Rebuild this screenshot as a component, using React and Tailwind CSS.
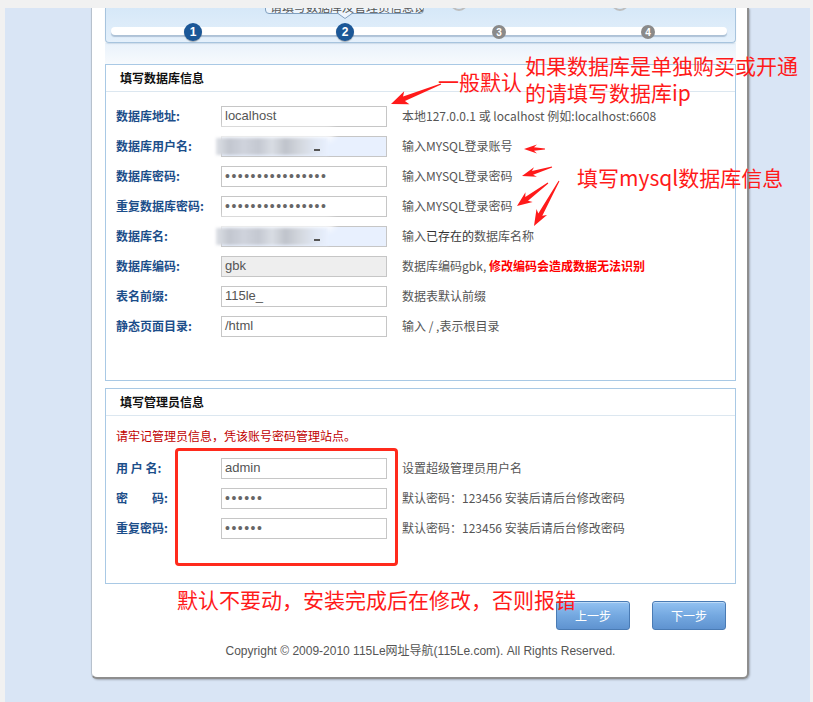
import React from "react";

const CN = "font-['Microsoft_YaHei','Noto_Sans_CJK_SC','Noto_Sans',sans-serif]";
const LAT = "font-['Liberation_Sans','Noto_Sans_CJK_SC',sans-serif]";

function Arrow({ t, p, L = 12, hw = 6, sw = 2.2, tw = 0.5 }) {
  const dx = p[0] - t[0];
  const dy = p[1] - t[1];
  const len = Math.hypot(dx, dy);
  const ux = dx / len;
  const uy = dy / len;
  const nx = -uy;
  const ny = ux;
  const bx = p[0] - ux * L;
  const by = p[1] - uy * L;
  const pts = [
    [t[0] + nx * tw, t[1] + ny * tw],
    [bx + nx * sw, by + ny * sw],
    [bx - ux * 3 + nx * hw, by - uy * 3 + ny * hw],
    p,
    [bx - ux * 3 - nx * hw, by - uy * 3 - ny * hw],
    [bx - nx * sw, by - ny * sw],
    [t[0] - nx * tw, t[1] - ny * tw],
  ];
  return <polygon points={pts.map((q) => q.join(",")).join(" ")} fill="#ff1a1a" />;
}

function Blur() {
  return (
    <>
      <div className="absolute left-[-7px] top-[-10px] w-[120px] h-[14px] bg-white/80 blur-[3px] rounded-full" />
      <div className="absolute left-[-6px] top-[1px] bottom-[1px] w-[112px] blur-[1.5px] bg-[linear-gradient(90deg,#dde0e6_0%,#c2c6cf_12%,#cfd3dc_25%,#c4c8d1_38%,#d9dde4_50%,#bfc3cb_62%,#d3d7de_75%,#dfe6f2_88%,#e8f0fe_100%)]" />
      <div className="absolute left-[92px] top-[12px] w-[6px] h-[2px] bg-[#555] blur-[0.5px]" />
    </>
  );
}

function Field({ row }) {
  let bg = "bg-white";
  if (row.disabled) bg = "bg-[#eeeeee]";
  if (row.blur) bg = "bg-[#e8f0fe]";
  return (
    <div className={`relative w-[166px] h-[21px] border border-[#c6c6c6] ${bg} flex items-center pl-[3px] text-[13px] text-[#555] ${LAT}`}>
      {row.blur && <Blur />}
      {row.pwd ? (
        <span className="text-[14px] tracking-[1.5px] text-[#666] leading-none">{"•".repeat(row.pwd)}</span>
      ) : (
        <span className="relative">{row.value}</span>
      )}
    </div>
  );
}

function Row({ row }) {
  return (
    <div className="flex items-center h-[30px]">
      <div className={`w-[105px] shrink-0 text-[12px] font-bold text-[#1c4e8a] ${CN} whitespace-pre`}>{row.label}</div>
      <Field row={row} />
      <div className={`ml-[15px] text-[12px] text-[#555] ${CN} whitespace-nowrap`}>{row.hint}</div>
    </div>
  );
}

const dbRows = [
  { label: "数据库地址:", value: "localhost", hint: "本地127.0.0.1 或 localhost 例如:localhost:6608" },
  { label: "数据库用户名:", blur: true, hint: "输入MYSQL登录账号" },
  { label: "数据库密码:", pwd: 16, hint: "输入MYSQL登录密码" },
  { label: "重复数据库密码:", pwd: 16, hint: "输入MYSQL登录密码" },
  {
    label: "数据库名:",
    blur: true,
    hint: (
      <>
        输入<span className="text-[#333]">已存在的</span>数据库名称
      </>
    ),
  },
  {
    label: "数据库编码:",
    value: "gbk",
    disabled: true,
    hint: (
      <>
        数据库编码gbk, <span className="font-bold text-[#ff0000]">修改编码会造成数据无法识别</span>
      </>
    ),
  },
  { label: "表名前缀:", value: "115le_", hint: "数据表默认前缀" },
  { label: "静态页面目录:", value: "/html", hint: "输入 / ,表示根目录" },
];

const adminRows = [
  { label: "用 户 名:", value: "admin", hint: "设置超级管理员用户名" },
  { label: "密　　码:", pwd: 6, hint: "默认密码：123456 安装后请后台修改密码" },
  { label: "重复密码:", pwd: 6, hint: "默认密码：123456 安装后请后台修改密码" },
];

function StepDot({ n, active, left }) {
  if (active) {
    return (
      <div
        className={`absolute top-[15px] w-[18px] h-[18px] rounded-full bg-[#1b5797] text-white text-[12px] font-bold flex items-center justify-center ${LAT} shadow-[0_1px_1px_rgba(0,0,0,0.3)]`}
        style={{ left: left - 9 }}
      >
        {n}
      </div>
    );
  }
  return (
    <div
      className={`absolute top-[17px] w-[14px] h-[14px] rounded-full bg-[#8a8a8a] text-white text-[10px] font-bold flex items-center justify-center ${LAT}`}
      style={{ left: left - 7 }}
    >
      {n}
    </div>
  );
}

export default function App() {
  return (
    <div className={`relative w-[813px] h-[702px] overflow-hidden bg-[#f1f1f1] pt-[8px] pl-[5px] pr-[3px] ${CN}`}>
      <div className="h-[694px] bg-[#d9e5f5] pl-[86px] overflow-hidden">
        <div className="w-[658px] h-[671px] bg-white border-l border-[#b7c1cd] border-r-2 border-r-[#8e8e8e] border-b-2 border-b-[#8e8e8e] rounded-b-[6px] shadow-[1px_1px_2px_rgba(0,0,0,0.25)] pl-[13px] pr-[11px] flex flex-col">
          {/* step header */}
          <div className="relative h-[35px] shrink-0 border-x border-b border-[#a7c4de] rounded-b-[4px] bg-[linear-gradient(180deg,#d6e8f8_0%,#e4f0fb_100%)] shadow-[0_1px_1px_rgba(120,150,180,0.25)]">
            {/* tooltip */}
            <div className="absolute left-[159px] top-[-14px] w-[159px] h-[20px] border border-[#7f9fbf] rounded-[4px] bg-[#eef5fc] overflow-hidden">
              <div className={`absolute left-[4px] top-[3px] text-[12px] text-[#555] whitespace-nowrap ${CN}`}>请填写数据库及管理员信息设置</div>
            </div>
            <svg className="absolute left-[232px] top-[5px]" width="14" height="6" viewBox="0 0 14 6">
              <polygon points="0,0 14,0 7,6" fill="#eef5fc" />
              <polyline points="0,0.5 7,5.5 14,0.5" fill="none" stroke="#7f9fbf" strokeWidth="1" />
            </svg>
            {/* upper circles */}
            <div className="absolute left-[344px] top-[-15px] w-[18px] h-[18px] rounded-full border-2 border-[#bdbdbd]" />
            <div className="absolute left-[505px] top-[-15px] w-[18px] h-[18px] rounded-full border-2 border-[#bdbdbd]" />
            {/* bar */}
            <div className="mt-[19px] ml-[5px] mr-[8px] h-[8px] rounded-full bg-white shadow-[0_2px_1px_rgba(110,140,170,0.45)]" />
            <StepDot n="1" active left={87} />
            <StepDot n="2" active left={239} />
            <StepDot n="3" left={393} />
            <StepDot n="4" left={542} />
          </div>
          <div className="h-[21px] shrink-0 bg-[linear-gradient(180deg,#e9f2fb_0%,#f7fafd_100%)]" />

          {/* section 1 */}
          <div className="h-[317px] shrink-0 border border-[#a9c9e5]">
            <div className="h-[27px] border-b border-[#dce7f0] pl-[14px] flex items-center text-[12px] font-bold text-[#111]">填写数据库信息</div>
            <div className="pt-[9px] pl-[10px]">
              {dbRows.map((r, i) => (
                <Row key={i} row={r} />
              ))}
            </div>
          </div>

          {/* section 2 */}
          <div className="mt-[7px] h-[196px] shrink-0 border border-[#a9c9e5]">
            <div className="h-[27px] border-b border-[#dce7f0] pl-[14px] flex items-center text-[12px] font-bold text-[#111]">填写管理员信息</div>
            <div className="pt-[10px] pl-[10px]">
              <div className="h-[20px] leading-[20px] text-[12px] text-[#c00000]">请牢记管理员信息，凭该账号密码管理站点。</div>
              <div className="mt-[7px]">
                {adminRows.map((r, i) => (
                  <Row key={i} row={r} />
                ))}
              </div>
            </div>
          </div>

          {/* buttons */}
          <div className="mt-[17px] flex justify-end gap-[22px] pr-[10px]">
            {["上一步", "下一步"].map((t) => (
              <button
                key={t}
                className="w-[74px] h-[29px] rounded-[3px] border border-[#4a7bb4] bg-[linear-gradient(180deg,#93c2f2_0%,#74a8e0_50%,#5f93d0_100%)] text-white text-[12px] shadow-[inset_0_1px_0_rgba(255,255,255,0.4)]"
              >
                {t}
              </button>
            ))}
          </div>
          <div className={`mt-[12px] text-center text-[12px] text-[#555] ${LAT}`}>
            Copyright © 2009-2010 115Le网址导航(115Le.com). All Rights Reserved.
          </div>
        </div>
      </div>

      {/* annotations */}
      <svg className="absolute left-0 top-0 pointer-events-none" width="813" height="702">
        <Arrow t={[441, 84]} p={[391, 104]} L={14} hw={7} sw={2.5} />
        <Arrow t={[545, 149]} p={[524, 149]} L={10} hw={4.5} sw={1.8} />
        <Arrow t={[552, 167]} p={[522, 176]} L={11} hw={5} sw={2} />
        <Arrow t={[548, 183]} p={[517, 206]} L={12} hw={6} sw={2.3} />
        <Arrow t={[559, 181]} p={[534, 226]} L={13} hw={6} sw={2.3} />
      </svg>
      <div className="absolute left-[438px] top-[68px] text-[21px] leading-[27px] text-[#ff1a1a] whitespace-nowrap">一般默认</div>
      <div className="absolute left-[525px] top-[52px] text-[21px] leading-[27px] text-[#ff1a1a] whitespace-nowrap">
        如果数据库是单独购买或开通
        <br />
        的请填写数据库ip
      </div>
      <div className="absolute left-[577px] top-[164px] text-[21px] leading-[27px] text-[#ff1a1a] whitespace-nowrap">填写mysql数据库信息</div>
      <div className="absolute left-[175px] top-[448px] w-[223px] h-[118px] border-[3px] border-[#ff2a1c] rounded-[4px]" />
      <div className="absolute left-[177px] top-[586px] text-[21px] leading-[27px] text-[#ff1a1a] whitespace-nowrap">默认不要动，安装完成后在修改，否则报错</div>
    </div>
  );
}
